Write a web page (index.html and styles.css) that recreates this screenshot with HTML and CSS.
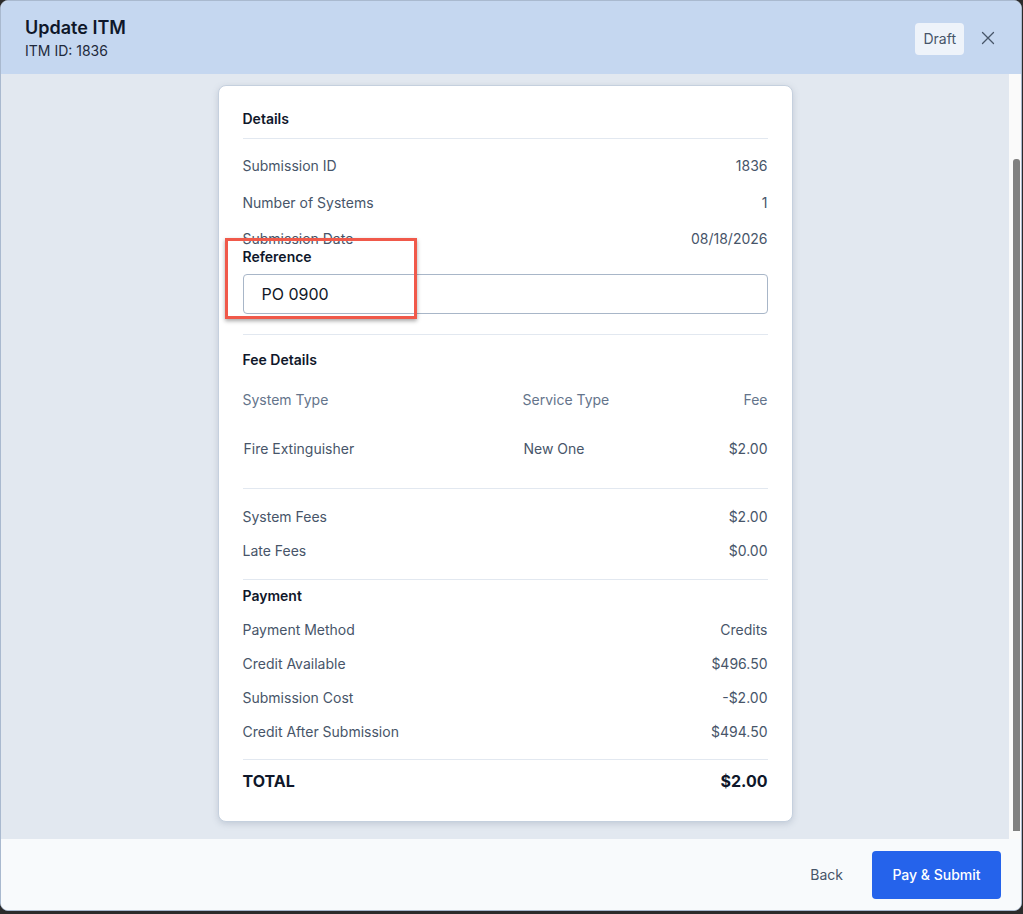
FILE: index.html
```html
<!DOCTYPE html>
<html lang="en">
<head>
    <meta charset="UTF-8">
    <meta name="viewport" content="width=device-width, initial-scale=1.0">
    <title>Update ITM</title>
    <link rel="stylesheet" href="styles.css">
</head>
<body>
    <div class="modal">
        <!-- Header -->
        <div class="modal-header">
            <div class="header-text">
                <h2>Update ITM</h2>
                <div class="subtitle">ITM ID: 1836</div>
            </div>
            <span class="badge">Draft</span>
            <button class="close-btn" aria-label="Close">
                <svg width="16" height="16" viewBox="0 0 16 16" fill="none" stroke="#475569" stroke-width="1.3" stroke-linecap="round">
                    <path d="M2.5 2.5l11 11M13.5 2.5l-11 11"/>
                </svg>
            </button>
        </div>

        <!-- Body -->
        <div class="modal-body">
            <div class="scroll-area">
                <div class="card">
                    <div class="annotation"></div>

                    <div class="section-title first">Details</div>
                    <div class="divider"></div>
                    <div class="detail-list">
                        <div class="row"><span>Submission ID</span><span>1836</span></div>
                        <div class="row"><span>Number of Systems</span><span>1</span></div>
                        <div class="row"><span>Submission Date</span><span>08/18/2026</span></div>
                    </div>

                    <div class="reference">
                        <label for="reference">Reference</label>
                        <input type="text" id="reference" value="PO 0900">
                    </div>
                    <div class="divider spaced"></div>

                    <div class="section-title">Fee Details</div>
                    <div class="fee-table">
                        <div class="fee-head">
                            <span>System Type</span>
                            <span>Service Type</span>
                            <span class="right">Fee</span>
                        </div>
                        <div class="fee-row">
                            <span class="indent">Fire Extinguisher</span>
                            <span class="indent">New One</span>
                            <span class="right">$2.00</span>
                        </div>
                    </div>
                    <div class="divider"></div>

                    <div class="summary">
                        <div class="row"><span>System Fees</span><span>$2.00</span></div>
                        <div class="row"><span>Late Fees</span><span>$0.00</span></div>
                    </div>
                    <div class="divider"></div>

                    <div class="section-title payment">Payment</div>
                    <div class="summary">
                        <div class="row"><span>Payment Method</span><span>Credits</span></div>
                        <div class="row"><span>Credit Available</span><span>$496.50</span></div>
                        <div class="row"><span>Submission Cost</span><span>-$2.00</span></div>
                        <div class="row"><span>Credit After Submission</span><span>$494.50</span></div>
                    </div>
                    <div class="divider"></div>

                    <div class="total"><span>TOTAL</span><span>$2.00</span></div>
                </div>
            </div>
            <div class="scrollbar"><div class="thumb"></div></div>
        </div>

        <!-- Footer -->
        <div class="modal-footer">
            <button class="btn-link">Back</button>
            <button class="btn-primary">Pay &amp; Submit</button>
        </div>
    </div>
</body>
</html>
```

FILE: styles.css
```css
* {
    box-sizing: border-box;
}
body {
    margin: 0;
    background: #2b2b2b;
    font-family: Inter, "Noto Sans", sans-serif;
    font-size: 14px;
    line-height: 20px;
    color: #475569;
    height: 914px;
    overflow: hidden;
}
.modal {
    width: 1022px;
    height: 911px;
    border: 1px solid #a9b9cf;
    border-radius: 8px;
    overflow: hidden;
    display: flex;
    flex-direction: column;
    background: #f8fafc;
}
.modal-header {
    background: #c5d7f0;
    height: 73px;
    display: flex;
    align-items: center;
    padding: 0 25px 0 24px;
    flex-shrink: 0;
}
.header-text {
    flex: 1;
    padding-top: 1px;
}
.header-text h2 {
    margin: 0;
    font-size: 18px;
    line-height: 24px;
    font-weight: 600;
    color: #0f172a;
}
.subtitle {
    font-size: 14px;
    line-height: 20px;
    color: #1e293b;
    margin-top: 1px;
}
.badge {
    background: #eef3fa;
    color: #475569;
    border-radius: 4px;
    padding: 6px 8px;
    font-size: 14px;
    line-height: 20px;
    margin-top: 2px;
}
.close-btn {
    border: none;
    background: none;
    padding: 0;
    margin-left: 16px;
    width: 16px;
    height: 16px;
    display: flex;
    cursor: pointer;
}
.modal-body {
    flex: 1;
    display: flex;
    background: #e2e8f0;
    min-height: 0;
}
.scroll-area {
    flex: 1;
    display: flex;
    justify-content: center;
    padding-top: 11px;
}
.scrollbar {
    width: 12px;
    background: #fafafa;
    padding: 85px 1px 8px 4px;
    display: flex;
}
.thumb {
    flex: 1;
    background: #808080;
    border-radius: 3px 3px 0 0;
}
.card {
    position: relative;
    width: 575px;
    height: 737px;
    background: #fff;
    border: 1px solid #c5d0de;
    border-radius: 8px;
    box-shadow: 0 2px 6px rgba(100, 116, 139, 0.25);
    padding: 0 24px;
}
.annotation {
    position: absolute;
    left: 6px;
    top: 152px;
    width: 192px;
    height: 81px;
    border: 3px solid #f0594a;
    box-shadow: 0 2px 4px rgba(0, 0, 0, 0.35);
    z-index: 2;
}
.section-title {
    font-weight: 600;
    color: #0f172a;
    margin-top: 15px;
    padding-bottom: 10px;
}
.section-title.first {
    margin-top: 23px;
    padding-bottom: 9px;
}
.section-title.payment {
    margin-top: 6px;
    padding-bottom: 14px;
}
.divider {
    height: 1px;
    background: #e2e8f0;
}
.divider.spaced {
    margin-top: 20px;
}
.row {
    display: flex;
    justify-content: space-between;
}
.detail-list {
    display: flex;
    flex-direction: column;
    gap: 16.5px;
    padding-top: 17px;
}
.reference {
    position: relative;
    background: #fff;
    margin-top: -2px;
}
.reference label {
    display: block;
    font-weight: 600;
    color: #0f172a;
}
.reference input {
    display: block;
    width: 100%;
    height: 40px;
    margin-top: 7px;
    border: 1px solid #a8b6c8;
    border-radius: 4px;
    padding: 0 18px;
    font-family: Inter, "Noto Sans", sans-serif;
    font-size: 16px;
    color: #111827;
    outline: none;
}
.fee-table {
    padding-top: 10px;
    padding-bottom: 29px;
}
.fee-head,
.fee-row {
    display: grid;
    grid-template-columns: 280px 1fr auto;
}
.fee-head {
    color: #64748b;
}
.fee-row {
    margin-top: 29px;
}
.indent {
    padding-left: 1px;
}
.right {
    text-align: right;
}
.summary {
    display: flex;
    flex-direction: column;
    gap: 14px;
    padding-top: 18px;
    padding-bottom: 18px;
}
.section-title.payment + .summary {
    padding-top: 0;
    padding-bottom: 17px;
}
.total {
    display: flex;
    justify-content: space-between;
    font-size: 16px;
    font-weight: 700;
    color: #0f172a;
    margin-top: 11px;
}
.modal-footer {
    height: 71px;
    flex-shrink: 0;
    background: #f8fafc;
    display: flex;
    align-items: center;
    justify-content: flex-end;
    gap: 13px;
    padding-right: 20px;
}
.btn-link {
    border: none;
    background: none;
    font-family: Inter, "Noto Sans", sans-serif;
    font-size: 14px;
    color: #475569;
    padding: 14px 16px;
    cursor: pointer;
}
.btn-primary {
    border: none;
    background: #2563eb;
    color: #fff;
    font-family: Inter, "Noto Sans", sans-serif;
    font-size: 14px;
    font-weight: 500;
    height: 48px;
    width: 129px;
    border-radius: 4px;
    cursor: pointer;
}
```
